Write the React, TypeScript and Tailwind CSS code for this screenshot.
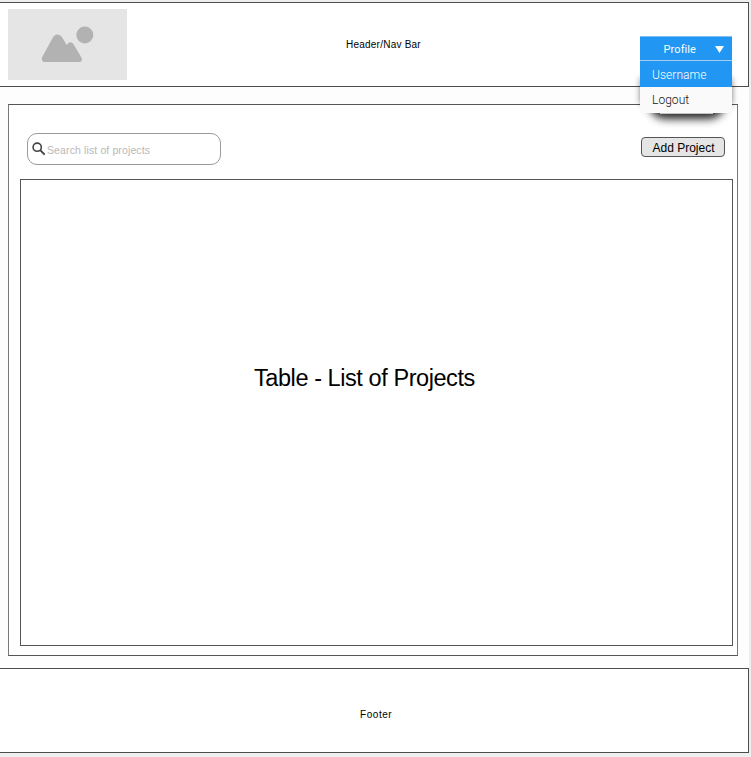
import React from "react";

function ImagePlaceholder() {
  return (
    <div className="h-[71px] w-[119px] bg-[#e5e5e5]">
      <svg width="119" height="71" viewBox="0 0 119 71" fill="#b2b2b2">
        <circle cx="76.8" cy="26" r="8.5" />
        <path d="M37 53 C34 53 33 50.5 34.5 47.5 L44.3 29.5 C46.8 24 52 24 54.8 29.5 L58.7 36 C61 32.3 64 32.3 66 36 L73.4 48.5 C74.8 51.2 73.6 53 71 53 Z" />
      </svg>
    </div>
  );
}

function ProfileMenu() {
  return (
    <div className="absolute left-[640px] top-[36px] w-[92px] font-['Roboto',sans-serif]">
      <div className="absolute left-0 top-[42px] h-[26px] w-[92px] shadow-[0_0_6px_rgba(0,0,0,0.45)]" />
      <div className="absolute left-[10px] top-[50px] h-[28px] w-[74px] rounded-b-[16px] shadow-[0_3px_9px_2px_rgba(0,0,0,0.85)]" />
      <button className="relative flex h-[24px] w-full items-center border-t border-[#7fbff7] bg-[#2196f3] pl-[23.5px] pt-px text-[11px] font-normal leading-none tracking-[0.1px] text-white">
        Profile
        <svg className="absolute left-[75px] top-[9px]" width="9" height="7" viewBox="0 0 9 7" fill="white">
          <path d="M0 0H9L4.5 7Z" />
        </svg>
      </button>
      <div className="relative h-px bg-[#a5cdf0]" />
      <div className="relative flex h-[26px] items-center bg-[#2196f3] pl-[12px] pt-[2px] text-[12px] font-light leading-none tracking-[0.05px] text-white">
        Username
      </div>
      <div className="relative flex h-[26px] items-center bg-[#fafafa] pl-[12px] text-[12px] font-light leading-none tracking-[0.05px] text-[#111]">
        Logout
      </div>
      <div className="absolute left-[20px] top-[77px] h-px w-[53px] bg-[#c4c4c4]" />
    </div>
  );
}

export default function App() {
  return (
    <div className="relative h-[757px] w-[751px] overflow-hidden bg-[#eeeeee] pt-[2px] font-['Liberation_Sans',Arial,sans-serif] text-black">
      <div className="w-[749px] bg-[#fdfdfd]">
        <header className="flex h-[85px] border-y border-r border-[#4d4d4d] bg-white pl-[8px] pt-[6px]">
          <ImagePlaceholder />
          <span className="ml-[219px] mt-[29px] text-[10px] leading-[14px] tracking-[0.23px]">Header/Nav Bar</span>
        </header>
        <div className="h-[581px] w-[748px] pl-[8px] pt-[17px]">
          <main className="h-[552px] w-[730px] border border-x-[#777] border-y-[#555] bg-white pl-[11px] pt-[28px]">
            <div className="flex h-[46px] w-[713px] items-start pl-[7px]">
              <label className="flex h-[32px] w-[194px] items-center rounded-[10px] border border-[#999] pl-[4px]">
                <svg width="14" height="14" viewBox="0 0 14 14" fill="none" stroke="#444">
                  <circle cx="5.2" cy="5.2" r="4.1" strokeWidth="1.6" />
                  <path d="M8.2 8.2L12.7 12.7" strokeWidth="1.9" />
                </svg>
                <span className="ml-px mt-[3px] text-[10.5px] leading-none tracking-[0.12px] text-[#b8b8b8]">Search list of projects</span>
              </label>
              <button className="ml-[420px] mt-[4px] h-[20px] w-[84px] rounded-[4px] border border-[#555] bg-[#e5e5e5] pl-px pt-px text-[12px] leading-[18px]">
                Add Project
              </button>
            </div>
            <section className="h-[467px] w-[713px] border border-[#555] bg-white pl-[233px] pt-[184px] text-[23.5px] leading-[28px] tracking-[-0.43px]">
              Table - List of Projects
            </section>
          </main>
        </div>
        <footer className="h-[85px] border-y border-r border-[#4d4d4d] bg-white pl-[360px] pt-[39px] text-[10px] leading-[14px] tracking-[0.55px]">
          Footer
        </footer>
      </div>
      <ProfileMenu />
    </div>
  );
}
